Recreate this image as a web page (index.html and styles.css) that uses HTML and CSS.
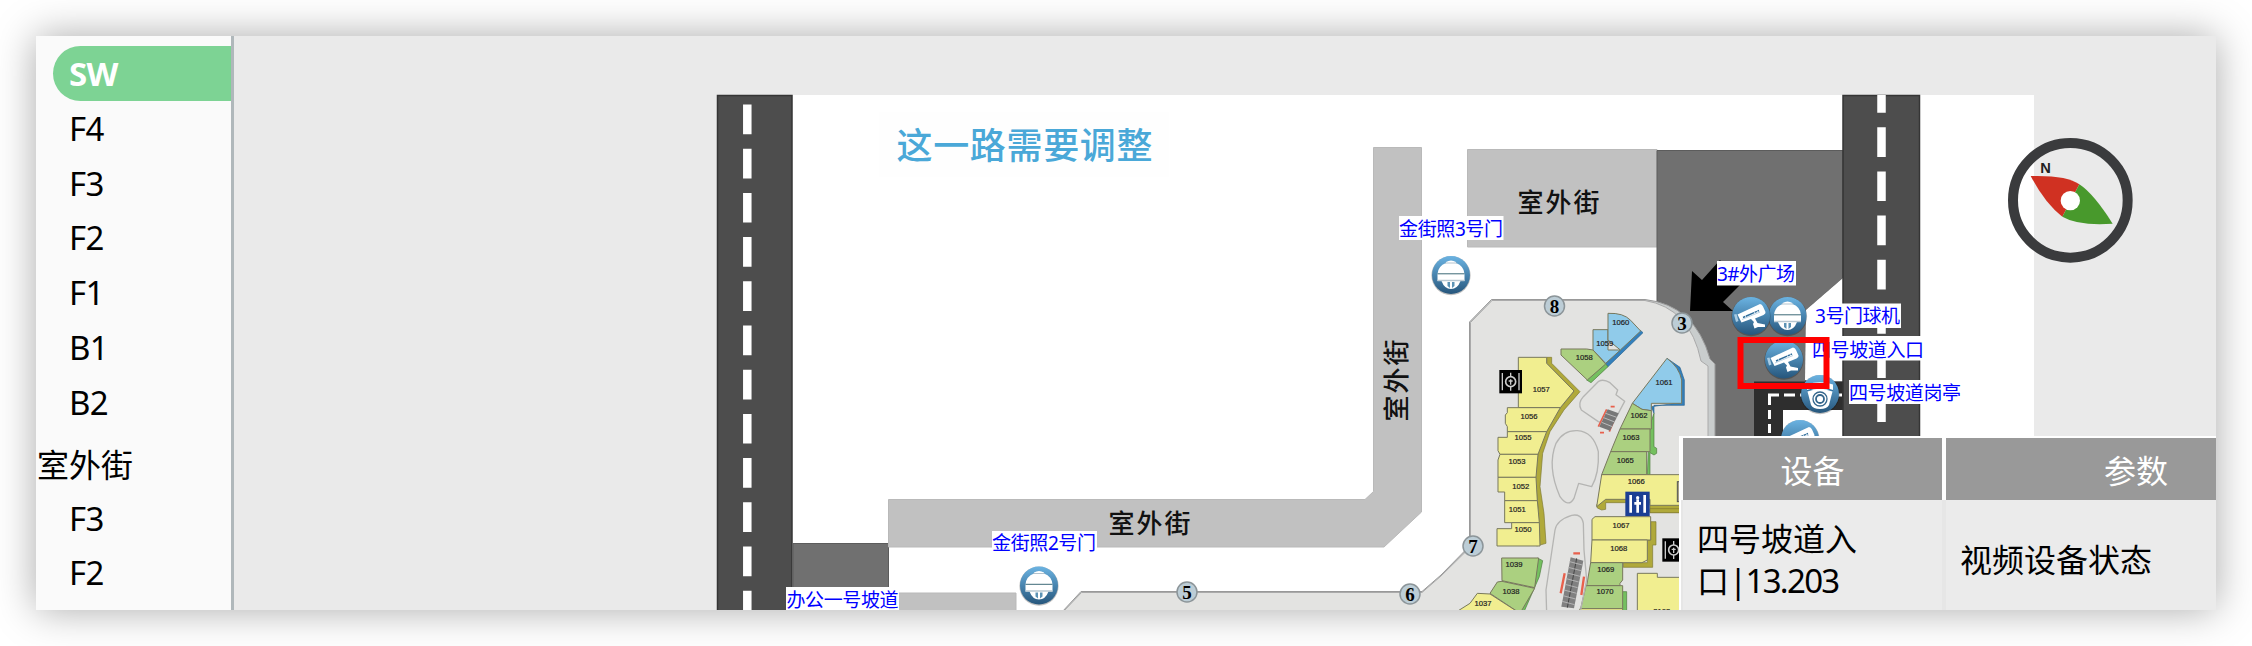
FILE: index.html
```
<!DOCTYPE html>
<html lang="zh-CN">
<head>
<meta charset="utf-8">
<title>楼层平面图</title>
<link rel="stylesheet" href="styles.css">
</head>
<body>
<div class="window">
  <nav class="floors">
    <ul class="floor-list">
      <li class="floor active">SW</li>
      <li class="floor">F4</li>
      <li class="floor">F3</li>
      <li class="floor">F2</li>
      <li class="floor">F1</li>
      <li class="floor">B1</li>
      <li class="floor">B2</li>
    </ul>
    <h2 class="group-title">室外街</h2>
    <ul class="floor-list">
      <li class="floor">F3</li>
      <li class="floor">F2</li>
    </ul>
  </nav>
  <main class="stage">
    <svg class="map" viewBox="234 36 1982 574">
      <defs>
        <linearGradient id="disc" x1="0" y1="0" x2="0" y2="1">
          <stop offset="0" stop-color="#6bb3e2"/><stop offset="1" stop-color="#26567c"/>
        </linearGradient>
        <symbol id="dome" viewBox="-20 -20 40 40" overflow="visible">
          <circle r="19.6" cy=".6" fill="#000" opacity=".25"/>
          <circle r="19" fill="url(#disc)"/>
          <path d="M-5-13Q0-16 5-13V-12Q13-9 13.500-1V6H9.500Q6.500 14 0 14T-9.500 6H-13.500V-1Q-13-9-5-12Z" fill="#fff"/>
          <path d="M-6-12H6" stroke="#9fb4c2" stroke-width=".8"/>
          <path d="M-13.500-1.200H13.500" stroke="#3c6a77" stroke-width="1"/>
          <path d="M-13.500 5.500H13.500" stroke="#b9c8d2" stroke-width="1.500"/>
          <path d="M-3.500 7V11L-1 13V7ZM3.500 7V11L1 13V7Z" fill="#5c93b5"/>
        </symbol>
        <symbol id="bullet" viewBox="-20 -20 40 40" overflow="visible">
          <circle r="19.600" cy=".6" fill="#000" opacity=".25"/>
          <circle r="19" fill="url(#disc)"/>
          <path d="M-17-1.500-14.500-2-12.500 5-15 6Z" fill="#a9cbe2"/>
          <path d="M-13.500-1.500 9-12Q11-12 12-9.500L14.500-4Q15-2.500 12.500-1L4 2.500 6.500 7 14 8.500V11H7L3.500 12.500 2 8 3 6 0 3-9.500 6.500Z" fill="#fff"/>
          <path d="M-8 1.500 8-5.500" stroke="#2f6d9b" stroke-width="1.500" stroke-dasharray="2.500 .6 9 .6"/>
          <path d="M-9 3.500 9-4" stroke="#8fb6d1" stroke-width=".6"/>
        </symbol>
        <symbol id="ptz" viewBox="-20 -20 40 40" overflow="visible">
          <circle r="19.600" cy=".6" fill="#000" opacity=".25"/>
          <circle r="19" fill="url(#disc)"/>
          <path d="M-13-9.500Q0-14 13-9.500V-4H-13Z" fill="#fff"/>
          <path d="M-12.500-2.500Q0-7 12.500-2.500L9 11Q7 15 0 15T-9 11Z" fill="#fff"/>
          <path d="M-13-3.500Q0-8 13-3.500" fill="none" stroke="#2f6d9b" stroke-width="1.200"/>
          <circle cy="5" r="7" fill="#fff" stroke="#34668c" stroke-width="1.300"/>
          <circle cy="5" r="4" fill="#fff" stroke="#34668c" stroke-width="1.800"/>
        </symbol>
        <symbol id="lift" viewBox="0 0 68 70" overflow="visible">
          <rect width="68" height="70"/>
          <circle cx="34" cy="35" r="15" fill="none" stroke="#ccc" stroke-width="5"/>
          <path d="M34 8V20M34 50V62M9 9V61M59 9V61M34 28V44M28 33H40" fill="none" stroke="#ccc" stroke-width="4"/>
        </symbol>
      </defs>

      <rect x="717" y="95" width="1317" height="515" fill="#fff"/>
      <rect x="879" y="112" width="290" height="65" fill="#fefefe"/>

      <!-- roads -->
      <rect x="717.500" y="95.500" width="74.500" height="530" class="road"/>
      <path d="M747.300 104.500V620" class="lane"/>
      <rect x="793" y="543.500" width="95.500" height="44" fill="#707070" stroke="#5c5c5c"/>
      <path d="M889 593H1016V612H889Z" class="street"/>
      <path d="M1373.500 147.500H1421.500V512L1384 547H888.500V499.500H1365L1373.500 491.500Z" class="street"/>
      <path d="M1467.500 149.500H1657V247H1467.500Z" class="street"/>
      <path d="M1657 150.500H1843V278L1806 310V382H1843V612H1657Z" fill="#707070" stroke="#5c5c5c"/>
      <path d="M1754 381.500H1843V612H1754Z" fill="#2e2e2e"/>
      <path d="M1783 410H1843V612H1783Z" fill="#fff"/>
      <path d="M1806 310 1843 278V380H1805Z" fill="#fff"/>
      <path d="M1768 395H1842" fill="none" stroke="#fff" stroke-width="3" stroke-dasharray="11 5"/>
      <path d="M1769.500 396V440" fill="none" stroke="#fff" stroke-width="3" stroke-dasharray="9 5"/>
      <rect x="1843" y="95.500" width="76.500" height="530" class="road"/>
      <path d="M1881.500 95V620" class="lane" stroke-dashoffset="12"/>
      <path d="M1690 311 1692 271 1702 280 1720 260 1740 285 1723 302 1733 311Z"/>

      <!-- mall outline -->
      <path d="M1062 612 1081 591.500H1422L1441 575 1469.500 546V322L1491.500 299.500H1645Q1695 305 1710 359L1715 364V612Z" fill="#c9cdcd" stroke="#999"/>
      <path d="M1063 612 1081.500 592.500H1422L1441 576 1470.500 547V322.500L1492 300.500H1645Q1690 308 1701 361L1708 366V612Z" fill="#e3e3e1" stroke="#aaa"/>

      <!-- shops, upper half -->
      <g transform="translate(1440 280) scale(.33333)" class="shops">
        <path class="blue-side" d="M497 250 600 150 609 158 503 261Z"/>
        <path class="green-side" d="M440 300 495 250 504 260 453 308Z"/>
        <path class="blue" d="M459 149H504V210L541 210 497 250 459 210Z"/>
        <path class="blue" d="M504 100Q550 98 572 121L602 153 541 210 504 180Z"/>
        <path class="green" d="M363 207H440L459 210 497 252 442 300 363 225Z"/>
        <path class="yellow-side" d="M320 232H335V250L420 335 372 390 330 455 308 520 300 620 312 700 318 790 290 798 296 700 285 600 294 520 318 450 360 385 402 333 320 250Z"/>
        <path class="yellow" d="M235 232H320V250L402 333 361 383H235Z"/>
        <path class="yellow" d="M202 383H361L320 455H202V440L196 430V405L202 398Z"/>
        <path class="yellow" d="M174 472H202V455H320L294 523H180L174 512Z"/>
        <path class="yellow" d="M180 523H294L288 592H174V540Z"/>
        <path class="yellow" d="M174 592H288L292 662H194V636H174Z"/>
        <path class="yellow" d="M194 662H292L298 728H194Z"/>
        <path class="yellow" d="M171 746H215V728H298L300 798H171Z"/>
        <path class="blue-side" d="M681 235 720 262 733 300V376H642V400L634 380 720 368Z"/>
        <path class="blue" d="M681 235Q718 262 725 300V370H634V392L606 388 577 370Z"/>
        <path class="green-side" d="M628 440 642 400V500L650 505V520L642 525 630 518V584H622Z"/>
        <path class="green" d="M577 370 606 388 634 392V447H540Z"/>
        <path class="green" d="M540 447H630V515H512Z"/>
        <path class="green" d="M512 515H620V584H485Z"/>
        <path class="yellow-side" d="M470 674 495 655H722V698H630V668H497V688L485 690 472 684Z"/>
        <path class="yellow" d="M485 584H724V676H630V658H497L470 680Z"/>
        <path class="yellow-side" d="M630 686H724V698H630Z"/>
        <path class="outline" d="M476 304Q490 296 510 308L533 330 528 344 554 364 515 438 475 425 424 390Q412 370 430 350Z"/>
        <path class="outline" d="M348 490Q370 450 412 452 460 455 475 515 478 580 455 620L416 610 402 655Q385 685 360 650 320 560 348 490Z"/>
        <path d="M500 388 475 440M530 400 508 455M512 380H524M480 458H492" stroke="#e8604c" stroke-width="5" fill="none"/>
        <path d="M503 388 536 400 510 452 478 440Z" fill="#777"/>
        <path d="M497 400 530 412M491 413 524 426M485 427 517 440" stroke="#bbb" stroke-width="3"/>
        <text x="542" y="135">1060</text><text x="494" y="197">1059</text><text x="433" y="241">1058</text>
        <text x="304" y="336">1057</text><text x="267" y="418">1056</text><text x="249" y="480">1055</text>
        <text x="231" y="551">1053</text><text x="242" y="628">1052</text><text x="232" y="695">1051</text>
        <text x="249" y="755">1050</text><text x="672" y="316">1061</text><text x="597" y="415">1062</text>
        <text x="573" y="480">1063</text><text x="556" y="549">1065</text><text x="589" y="611">1066</text>
        <use href="#lift" x="178" y="270" width="68" height="70"/>
      </g>

      <!-- shops, lower half -->
      <g transform="translate(1440 440) scale(.33333)" class="shops">
        <path class="yellow-side" d="M632 245H648V315H638V382H550V368H622V300H632Z"/>
        <path class="yellow" d="M456 238 465 230H632V300H456Z"/>
        <path class="yellow" d="M456 300H622V360L606 368H452Z"/>
        <path class="green-side" d="M545 455H560V520H545Z"/>
        <path class="green" d="M452 368H548V420L540 430V437H440Z"/>
        <path class="green" d="M438 437H548V506H422Z"/>
        <path class="yellow" d="M420 506H548V530H416Z"/>
        <path class="green-side" d="M292 354 308 362 298 410 250 520H230L285 430Z"/>
        <path class="green" d="M185 354H296L284 443 186 422Z"/>
        <path class="green" d="M172 426 186 424 284 445 240 520 150 460Z"/>
        <path class="yellow" d="M55 512 90 490 112 460 150 462 240 520H50Z"/>
        <path class="yellow" d="M592 400H652V412H722V520H592Z"/>
        <path class="outline" d="M345 270Q350 240 395 226 425 220 430 250L432 330 440 420 420 520H320L318 450Z"/>
        <path d="M400 340H420M374 400 362 460M432 410 424 465" stroke="#e8604c" stroke-width="7" fill="none"/>
        <path d="M392 352 430 362 402 505 364 500Z" fill="#808080"/>
        <path d="M410 355 382 503" stroke="#444" stroke-width="3"/>
        <path d="M389 365 427 375M385 382 423 392M382 399 420 409M379 416 416 426M375 433 413 443M372 450 410 460M369 467 407 477M366 484 404 494" stroke="#b4b4b4" stroke-width="3"/>
        <text x="543" y="263">1067</text><text x="536" y="332">1068</text><text x="497" y="397">1069</text>
        <text x="495" y="463">1070</text><text x="222" y="380">1039</text><text x="213" y="463">1038</text>
        <text x="129" y="497">1037</text><text x="665" y="523">2103</text>
        <rect x="712" y="125" width="12" height="60" fill="#a39e83" stroke="#555" stroke-width="3"/>
        <rect x="556" y="155" width="73" height="73" fill="#1c3f94"/>
        <path d="M572 165V218M614 165V218" stroke="#fff" stroke-width="8"/>
        <circle cx="593" cy="173" r="5" fill="#fff"/>
        <path d="M593 178V218M583 190H603" stroke="#fff" stroke-width="8"/>
        <use href="#lift" x="667" y="295" width="68" height="70"/>
      </g>

      <!-- entrance numbers -->
      <g class="gate">
        <circle cx="1554.500" cy="306" r="10"/><text x="1554.500" y="312.500">8</text>
        <circle cx="1682" cy="323" r="10"/><text x="1682" y="329.500">3</text>
        <circle cx="1473" cy="546" r="10"/><text x="1473" y="552.500">7</text>
        <circle cx="1410" cy="594" r="10"/><text x="1410" y="600.500">6</text>
        <circle cx="1187" cy="592" r="10"/><text x="1187" y="598.500">5</text>
      </g>

      <text class="headline" x="896.500" y="159" textLength="256">这一路需要调整</text>
      <text class="street-name" x="1517.500" y="211.500" textLength="82">室外街</text>
      <text class="street-name" x="1108.500" y="533" textLength="82">室外街</text>
      <text class="street-name" transform="translate(1405.500 421.500) rotate(-90)" textLength="82">室外街</text>

      <!-- camera pins -->
      <g class="pin">
        <rect x="1399" y="216" width="104.500" height="24"/><text x="1399" y="236" textLength="104">金街照3号门</text>
        <rect x="1717" y="261" width="79" height="24.500"/><text x="1717" y="281" textLength="78">3#外广场</text>
        <rect x="1815" y="303.500" width="86" height="24.500"/><text x="1815" y="323" textLength="85">3号门球机</text>
        <rect x="1812" y="336" width="112" height="24.500"/><text x="1812" y="356.500" textLength="112">四号坡道入口</text>
        <rect x="1849" y="380" width="112" height="24"/><text x="1849" y="399.500" textLength="112">四号坡道岗亭</text>
        <rect x="992" y="531" width="105" height="22"/><text x="992" y="550" textLength="104">金街照2号门</text>
        <rect x="786" y="587" width="113" height="24"/><text x="786.500" y="607" textLength="112">办公一号坡道</text>
      </g>
      <use href="#dome" x="1431" y="255" width="40" height="40"/>
      <use href="#dome" x="1019" y="565.500" width="40" height="40"/>
      <use href="#dome" x="1767.500" y="296" width="40" height="40"/>
      <use href="#bullet" x="1731" y="296" width="40" height="40"/>
      <use href="#bullet" x="1764" y="339.500" width="40" height="40"/>
      <use href="#ptz" x="1800" y="374" width="40" height="40"/>
      <use href="#bullet" x="1780" y="419" width="40" height="40"/>
      <rect x="1740.500" y="340" width="86" height="46" fill="none" stroke="#f00" stroke-width="6"/>

      <!-- compass -->
      <g transform="translate(1800 60) scale(.33333)">
        <circle cx="811" cy="421" r="172" fill="none" stroke="#3a3b3d" stroke-width="30"/>
        <path d="M692 348Q800 345 838 373L787 470Q735 430 692 348Z" fill="#d03122"/>
        <path d="M838 373Q880 400 938 491 835 498 787 470Z" fill="#48992c"/>
        <circle cx="811" cy="422" r="29" fill="#fff"/>
        <text x="737" y="338" class="north">N</text>
      </g>
    </svg>

    <div class="panel">
      <div class="head">设备</div>
      <div class="head">参数</div>
      <div class="cell"><p class="value">四号坡道入口<span class="code">|13.203</span></p></div>
      <div class="cell"><p class="value">视频设备状态</p></div>
    </div>
  </main>
</div>
</body>
</html>
```
FILE: styles.css
```
body {
  margin: 0;
  height: 646px;
  background: #fff;
  font-family: "Noto Sans", "Noto Sans CJK SC", sans-serif;
  overflow: hidden;
  padding: 36px;
  box-sizing: border-box;
}

.window {
  display: flex;
  height: 574px;
  box-shadow: 0 0 38px rgba(0, 0, 0, .34);
}

.floors {
  box-sizing: border-box;
  flex: none;
  width: 198px;
  padding-top: 10px;
  background: #fafafa;
  border-right: 3px solid #b0b8bb;
  font-size: 33px;
  color: #000;
  overflow: hidden;
}

.floor-list {
  margin: 0;
  padding: 0 0 0 17px;
  list-style: none;
}

.floor {
  height: 54.8px;
  line-height: 56px;
  padding-left: 16px;
  letter-spacing: -.6px;
}

.floor.active {
  background: #7dd394;
  border-radius: 28px 0 0 28px;
  color: #fff;
  font-weight: 700;
}

.group-title {
  margin: 0;
  height: 61px;
  line-height: 67px;
  padding-left: 1px;
  font-size: 32px;
  font-weight: 400;
  font-family: "Noto Sans CJK SC", sans-serif;
}

.stage {
  position: relative;
  flex: 1;
  min-width: 0;
  background: #eaeaea;
  overflow: hidden;
}

.map {
  display: block;
  width: 1982px;
  height: 574px;
}

.road { fill: #4d4d4d; stroke: #353535; stroke-width: 1.5; }
.lane { stroke: #fff; stroke-width: 8.500; stroke-dasharray: 29.7 14.5; fill: none; }
.street { fill: #c1c1c1; stroke: #b9b9b9; }

.shops path { stroke-linejoin: round; }
.shops .yellow, .shops .green, .shops .blue { stroke: #77775c; stroke-width: 3; }
.shops .yellow { fill: #f1ee90; }
.shops .green { fill: #abd080; }
.shops .blue { fill: #90cbea; }
.shops .yellow-side { fill: #b0a93a; stroke: #7d7832; stroke-width: 2; }
.shops .green-side { fill: #74c05f; stroke: #4b7b3c; stroke-width: 2; }
.shops .blue-side { fill: #3380bc; stroke: #2a648f; stroke-width: 2; }
.shops .outline { fill: none; stroke: #b5b5b3; stroke-width: 4; }
.shops text {
  font: 500 23px "Liberation Sans", sans-serif;
  fill: #222;
  stroke: #222;
  stroke-width: .6;
  text-anchor: middle;
}

.gate circle { fill: #bccdd6; stroke: #8c9599; stroke-width: 1.5; }
.gate text {
  font: 700 19px "Liberation Serif", serif;
  text-anchor: middle;
}

.headline { font: 500 36px "Noto Sans CJK SC", sans-serif; fill: #4aa8d8; }
.street-name { font: 500 26px "Noto Sans CJK SC", sans-serif; fill: #111; }
.north { font: 700 44px "Liberation Sans", sans-serif; text-anchor: middle; fill: #222; }

.pin rect { fill: #fff; }
.pin text {
  font-family: "Noto Sans", "Noto Sans CJK SC", sans-serif;
  font-size: 19px;
  font-weight: 400;
  fill: #00f;
}

/* device table floating over the map, cut off by the window edge */
.panel {
  position: absolute;
  left: 1445px;
  top: 400px;
  width: 651px;
  height: 174px;
  box-sizing: border-box;
  padding: 2px 0 0 4px;
  display: grid;
  grid-template-columns: 259px 380px;
  grid-template-rows: 62px 130px;
  column-gap: 4px;
  background: linear-gradient(#fff 64px, #e6e6e6 64px);
  box-shadow: inset 2px 0 0 #fff;
}

.head {
  display: flex;
  align-items: center;
  justify-content: center;
  background: #999;
  color: #fff;
  font-size: 32px;
}

.cell {
  display: flex;
  align-items: center;
  padding: 0 80px 11px 14px;
  background: #ebebeb;
  color: #000;
  font-size: 32px;
  line-height: 42px;
}

.value { margin: 0; }

.code {
  font-size: 33px;
  letter-spacing: -1.7px;
}
```
